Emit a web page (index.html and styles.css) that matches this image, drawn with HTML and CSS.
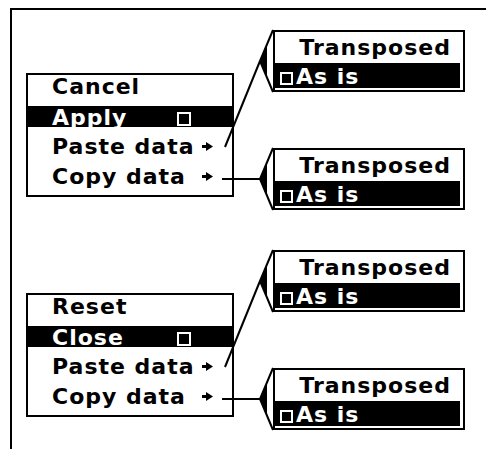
FILE: index.html
```html
<!DOCTYPE html>
<html lang="en">
<head>
    <meta charset="UTF-8">
    <meta name="viewport" content="width=device-width, initial-scale=1.0">
    <title>Menus</title>
    <link rel="stylesheet" href="styles.css">
</head>
<body>
    <div class="frame">
        <div class="group">
            <div class="menu">
                <div class="item"><span>Cancel</span></div>
                <div class="item hot"><span>Apply</span><span class="check"></span></div>
                <div class="item"><span>Paste data</span><svg class="arrow" viewBox="0 0 11 9"><path d="M0 4.5H6" stroke="#000" stroke-width="3"/><polygon points="4,0 11,4.5 4,9"/></svg></div>
                <div class="item"><span>Copy data</span><svg class="arrow" viewBox="0 0 11 9"><path d="M0 4.5H6" stroke="#000" stroke-width="3"/><polygon points="4,0 11,4.5 4,9"/></svg></div>
            </div>
            <div class="subs">
                <div class="sub">
                    <div class="opt">Transposed</div>
                    <div class="opt hot"><span class="check"></span><span>As is</span></div>
                </div>
                <div class="sub">
                    <div class="opt">Transposed</div>
                    <div class="opt hot"><span class="check"></span><span>As is</span></div>
                </div>
            </div>
            <svg class="links" viewBox="0 0 474 180">
                <path d="M213 117L248 31" stroke="#000" stroke-width="2" fill="none"/>
                <path d="M261 0L248 31L261 62" stroke="#000" stroke-width="2" fill="none"/>
                <polygon points="248,31 255,15 255,47"/>
                <path d="M210 149H248" stroke="#000" stroke-width="2" fill="none"/>
                <path d="M261 118L248 149L261 180" stroke="#000" stroke-width="2" fill="none"/>
                <polygon points="248,149 255,133 255,165"/>
            </svg>
        </div>

        <div class="group">
            <div class="menu">
                <div class="item"><span>Reset</span></div>
                <div class="item hot"><span>Close</span><span class="check"></span></div>
                <div class="item"><span>Paste data</span><svg class="arrow" viewBox="0 0 11 9"><path d="M0 4.5H6" stroke="#000" stroke-width="3"/><polygon points="4,0 11,4.5 4,9"/></svg></div>
                <div class="item"><span>Copy data</span><svg class="arrow" viewBox="0 0 11 9"><path d="M0 4.5H6" stroke="#000" stroke-width="3"/><polygon points="4,0 11,4.5 4,9"/></svg></div>
            </div>
            <div class="subs">
                <div class="sub">
                    <div class="opt">Transposed</div>
                    <div class="opt hot"><span class="check"></span><span>As is</span></div>
                </div>
                <div class="sub">
                    <div class="opt">Transposed</div>
                    <div class="opt hot"><span class="check"></span><span>As is</span></div>
                </div>
            </div>
            <svg class="links" viewBox="0 0 474 180">
                <path d="M213 117L248 31" stroke="#000" stroke-width="2" fill="none"/>
                <path d="M261 0L248 31L261 62" stroke="#000" stroke-width="2" fill="none"/>
                <polygon points="248,31 255,15 255,47"/>
                <path d="M210 149H248" stroke="#000" stroke-width="2" fill="none"/>
                <path d="M261 118L248 149L261 180" stroke="#000" stroke-width="2" fill="none"/>
                <polygon points="248,149 255,133 255,165"/>
            </svg>
        </div>
    </div>
</body>
</html>
```

FILE: styles.css
```css
*{
    margin: 0px;
    padding: 0px;
    box-sizing: border-box;
}
body{
    height: 449px;
    overflow: hidden;
    background-color: #fff;
    color: #000;
    font-family: "DejaVu Sans", sans-serif;
    font-weight: bold;
    font-size: 22px;
    letter-spacing: 1px;
}
.frame{
    margin: 8px 0 0 10px;
    height: 460px;
    border-top: 2px solid #000;
    border-left: 2px solid #000;
    padding-top: 20px;
}
.group{
    position: relative;
    display: flex;
    align-items: flex-start;
    padding-left: 14px;
}
.group + .group{
    margin-top: 40px;
}

/* main menu */
.menu{
    width: 208px;
    margin-top: 43px;
    border: 2px solid #000;
    background-color: #fff;
}
.item{
    display: flex;
    justify-content: space-between;
    align-items: flex-start;
    height: 30px;
    line-height: 24px;
    padding: 0 19px 0 24px;
    white-space: nowrap;
}
.item.hot{
    height: 21px;
    margin: 1px 0 8px;
    background-color: #000;
    color: #fff;
}
.item .check{
    flex: none;
    width: 14px;
    height: 14px;
    border: 2px solid #fff;
    margin: 6px 22px 0 0;
}
.arrow{
    flex: none;
    width: 11px;
    height: 9px;
    margin-top: 7px;
}

/* sub menus */
.subs{
    display: flex;
    flex-direction: column;
    gap: 56px;
    margin-left: 39px;
}
.sub{
    width: 192px;
    height: 62px;
    border: 2px solid #000;
    background-color: #fff;
}
.opt{
    height: 31px;
    line-height: 24px;
    padding: 4px 12px 0 0;
    text-align: right;
    white-space: nowrap;
}
.opt.hot{
    display: flex;
    align-items: flex-start;
    height: 25px;
    margin-right: 3px;
    padding: 2px 0 0 5px;
    background-color: #000;
    color: #fff;
    text-align: left;
}
.opt .check{
    flex: none;
    width: 13px;
    height: 13px;
    border: 2px solid #fff;
    margin: 7px 3px 0 0;
}

.links{
    position: absolute;
    top: 0;
    left: 0;
    width: 474px;
    height: 180px;
    overflow: visible;
}
```
